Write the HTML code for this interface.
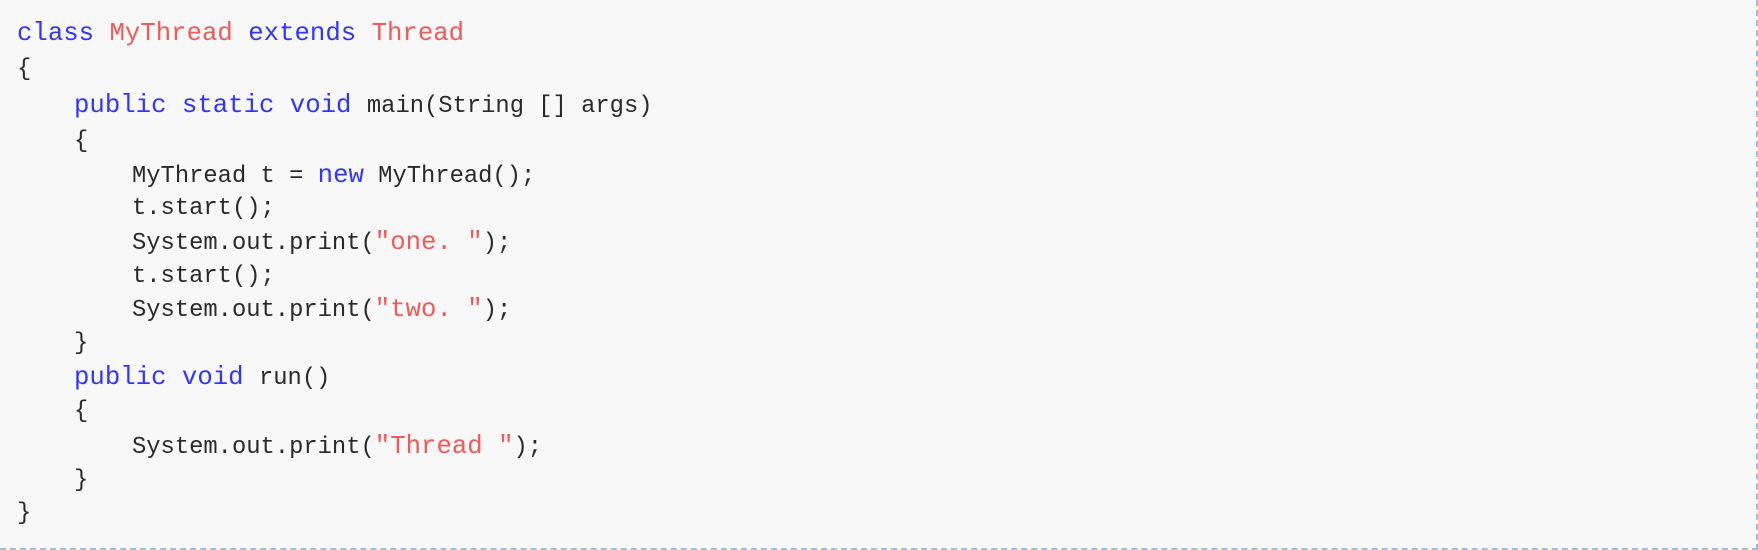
<!DOCTYPE html>
<html><head><meta charset="utf-8"><style>
html,body{margin:0;padding:0;background:#fff;}
.box{position:absolute;left:0;top:0;width:1756px;height:548px;background:#f8f8f8;border-right:2px dashed #9bbfdd;border-bottom:2px dashed #9bbfdd;box-sizing:content-box;}
.l{position:absolute;white-space:pre;font-family:"Liberation Mono",monospace;font-size:23.8px;line-height:34px;height:34px;color:#2a2a2a;}
.k{color:#3333ff;font-size:25.7px;}
.r{color:#f05a5a;font-size:25.7px;}
</style></head><body>
<div class="box">
<div class="l" style="left:17px;top:17px"><span class="k">class</span><span class="k"> </span><span class="r">MyThread</span><span class="k"> extends </span><span class="r">Thread</span></div>
<div class="l" style="left:17px;top:53px">{</div>
<div class="l" style="left:74px;top:89px"><span class="k">public static void </span>main(String [] args)</div>
<div class="l" style="left:74px;top:125px">{</div>
<div class="l" style="left:132px;top:159px">MyThread t = <span class="k">new</span> MyThread();</div>
<div class="l" style="left:132px;top:192px">t.start();</div>
<div class="l" style="left:132px;top:226px">System.out.print(<span class="r">"one. "</span>);</div>
<div class="l" style="left:132px;top:260px">t.start();</div>
<div class="l" style="left:132px;top:293px">System.out.print(<span class="r">"two. "</span>);</div>
<div class="l" style="left:74px;top:327px">}</div>
<div class="l" style="left:74px;top:361px"><span class="k">public void </span>run()</div>
<div class="l" style="left:74px;top:395px">{</div>
<div class="l" style="left:132px;top:430px">System.out.print(<span class="r">"Thread "</span>);</div>
<div class="l" style="left:74px;top:464px">}</div>
<div class="l" style="left:17px;top:497px">}</div>
</div>
</body></html>
